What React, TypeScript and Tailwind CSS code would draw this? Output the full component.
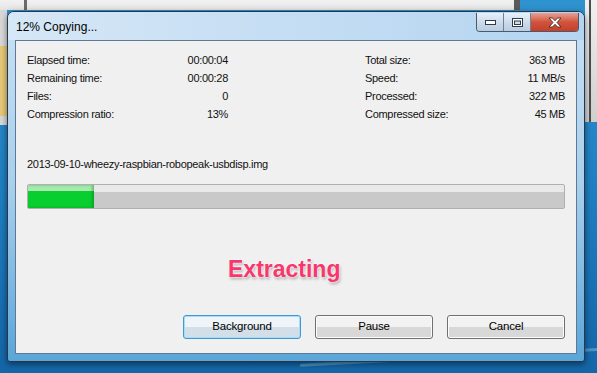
import { useState } from 'react';

const stats = [
    [
        ['Elapsed time:', '00:00:04'],
        ['Remaining time:', '00:00:28'],
        ['Files:', '0'],
        ['Compression ratio:', '13%'],
    ],
    [
        ['Total size:', '363 MB'],
        ['Speed:', '11 MB/s'],
        ['Processed:', '322 MB'],
        ['Compressed size:', '45 MB'],
    ],
];

function CaptionButtons() {
    return (
        <div className="absolute right-[5px] top-[1px] flex h-[19px] overflow-hidden rounded-b-[4px] border border-t-0 border-[#4a5a6c]">
            {/* minimize */}
            <div className="flex w-[27px] items-center justify-center border-r border-[#6e8296] bg-gradient-to-b from-[#e9f0f8] via-[#cddcec] to-[#b9cce0]">
                <svg width="11" height="6" viewBox="0 0 11 6">
                    <rect x="0.5" y="1.5" width="10" height="4" fill="#fff" stroke="#2f3c4a" />
                </svg>
            </div>
            {/* maximize */}
            <div className="flex w-[27px] items-center justify-center border-r border-[#6e8296] bg-gradient-to-b from-[#e9f0f8] via-[#cddcec] to-[#b9cce0]">
                <svg width="11" height="9" viewBox="0 0 11 9">
                    <rect x="0.5" y="0.5" width="10" height="8" fill="#fff" stroke="#2f3c4a" />
                    <rect x="2.5" y="3" width="6" height="3.5" fill="#cfdbe8" stroke="#2f3c4a" />
                </svg>
            </div>
            {/* close */}
            <div className="flex w-[47px] items-center justify-center bg-gradient-to-b from-[#e6a091] via-[#d0533d] to-[#c63f27]">
                <svg width="14" height="11" viewBox="0 0 14 11">
                    <path
                        d="M1 1 L4.5 1 L7 3.7 L9.5 1 L13 1 L9 5.5 L13 10 L9.5 10 L7 7.3 L4.5 10 L1 10 L5 5.5 Z"
                        fill="#fff"
                        stroke="#4b2a24"
                        strokeWidth="0.9"
                        strokeLinejoin="round"
                    />
                </svg>
            </div>
        </div>
    );
}

function DialogButton({ label, focused }: { label: string; focused?: boolean }) {
    return (
        <button
            className={
                focused
                    ? "h-[24px] w-[118px] rounded-[3px] border border-[#3c9bd6] bg-gradient-to-b from-[#eef4f8] from-50% to-[#d3dfe8] to-50% text-[11.5px] tracking-[-0.2px] text-black shadow-[inset_0_0_0_1px_#a8dcf6]"
                    : "h-[24px] w-[118px] rounded-[3px] border border-[#707070] bg-gradient-to-b from-[#f2f2f2] from-50% to-[#d8d8d8] to-50% text-[11.5px] tracking-[-0.2px] text-black shadow-[inset_0_0_0_1px_#fcfcfc]"
            }
        >
            {label}
        </button>
    );
}

export default function App() {
    const [progress] = useState(12.4);

    return (
        <div className="relative h-[373px] w-[597px] overflow-hidden bg-gradient-to-b from-[#2f93cf] via-[#1f7fc2] to-[#1466a8] font-['Liberation_Sans',Arial,sans-serif]">
            {/* Windows behind */}
            <div className="absolute left-[-20px] top-[-10px] h-[20px] w-[540px] border-r-[6px] border-[#5a5a5a] bg-gradient-to-b from-[#ffffff] to-[#e4e4e4]">
                <div className="absolute left-[44px] top-0 h-full w-[3px] bg-[#6a6a6a]" />
            </div>
            <div className="absolute left-0 top-[10px] h-[115px] w-[7px] bg-[#d8d8d8]">
                <div className="mt-[36px] h-[70px] w-full bg-[#e6c877]" />
            </div>
            <div className="absolute left-[585px] top-0 h-[122px] w-[12px] bg-gradient-to-b from-[#f0f0f0] to-[#cfcfcf]">
                <div className="ml-[4px] h-full w-[2px] bg-[#4d4d4d]" />
            </div>
            <div className="absolute left-[300px] top-[355px] h-[3px] w-[330px] -rotate-3 bg-[#9fd0ee]/40" />

            {/* Main window */}
            <div className="absolute left-[7px] top-[11px] flex h-[351px] w-[578px] flex-col rounded-t-[7px] rounded-b-[3px] border border-[#23384c] bg-gradient-to-b from-[#c9e0f4] via-[#a9cfec] to-[#5aa5d8] shadow-[0_2px_6px_rgba(0,0,0,0.5)]">
                {/* Title bar */}
                <div className="relative h-[28px] shrink-0 rounded-t-[6px] bg-gradient-to-r from-[#d6e7f6] via-[#c4ddf3] to-[#b5d4f0]">
                    <span className="absolute left-[8px] top-[8px] text-[12px] leading-[15px] text-black">
                        12% Copying...
                    </span>
                    <CaptionButtons />
                </div>

                {/* Client area */}
                <div className="mx-[7px] mb-[7px] flex flex-1 flex-col border border-[#5b7a98] bg-[#f0f0f0] px-[11px] pt-[10px] pb-[14px] text-[11px] tracking-[-0.3px] text-[#111]">
                    {/* Stats */}
                    <div className="flex justify-between">
                        {stats.map((col, i) => (
                            <div key={i} className={i === 0 ? "w-[201px]" : "w-[200px]"}>
                                {col.map(([label, value]) => (
                                    <div key={label} className="flex h-[18px] items-center justify-between">
                                        <span>{label}</span>
                                        <span>{value}</span>
                                    </div>
                                ))}
                            </div>
                        ))}
                    </div>

                    {/* File name */}
                    <div className="mt-[32px] flex h-[18px] items-center">
                        2013-09-10-wheezy-raspbian-robopeak-usbdisp.img
                    </div>

                    {/* Progress bar */}
                    <div className="mt-[11px] h-[25px] overflow-hidden rounded-[2px] border border-[#b0b0b0] bg-gradient-to-b from-[#e9e9e9] from-30% to-[#c9c9c9] to-30%">
                        <div
                            className="h-full bg-gradient-to-b from-[#a6eaae] from-25% to-[#08cf2f] to-25% shadow-[inset_-2px_0_3px_rgba(0,90,20,0.35)]"
                            style={{ width: `${progress}%` }}
                        />
                    </div>

                    {/* Status */}
                    <div className="mt-[45px] flex h-[30px] items-center pl-[201px]">
                        <span className="text-[23px] font-bold tracking-normal text-[#f8376d] [text-shadow:0_0_2px_#fff,0_0_3px_#fff,1px_2px_3px_rgba(0,0,0,0.35)]">
                            Extracting
                        </span>
                    </div>

                    {/* Buttons */}
                    <div className="mt-auto flex justify-end gap-[14px]">
                        <DialogButton label="Background" focused />
                        <DialogButton label="Pause" />
                        <DialogButton label="Cancel" />
                    </div>
                </div>
            </div>
        </div>
    );
}
